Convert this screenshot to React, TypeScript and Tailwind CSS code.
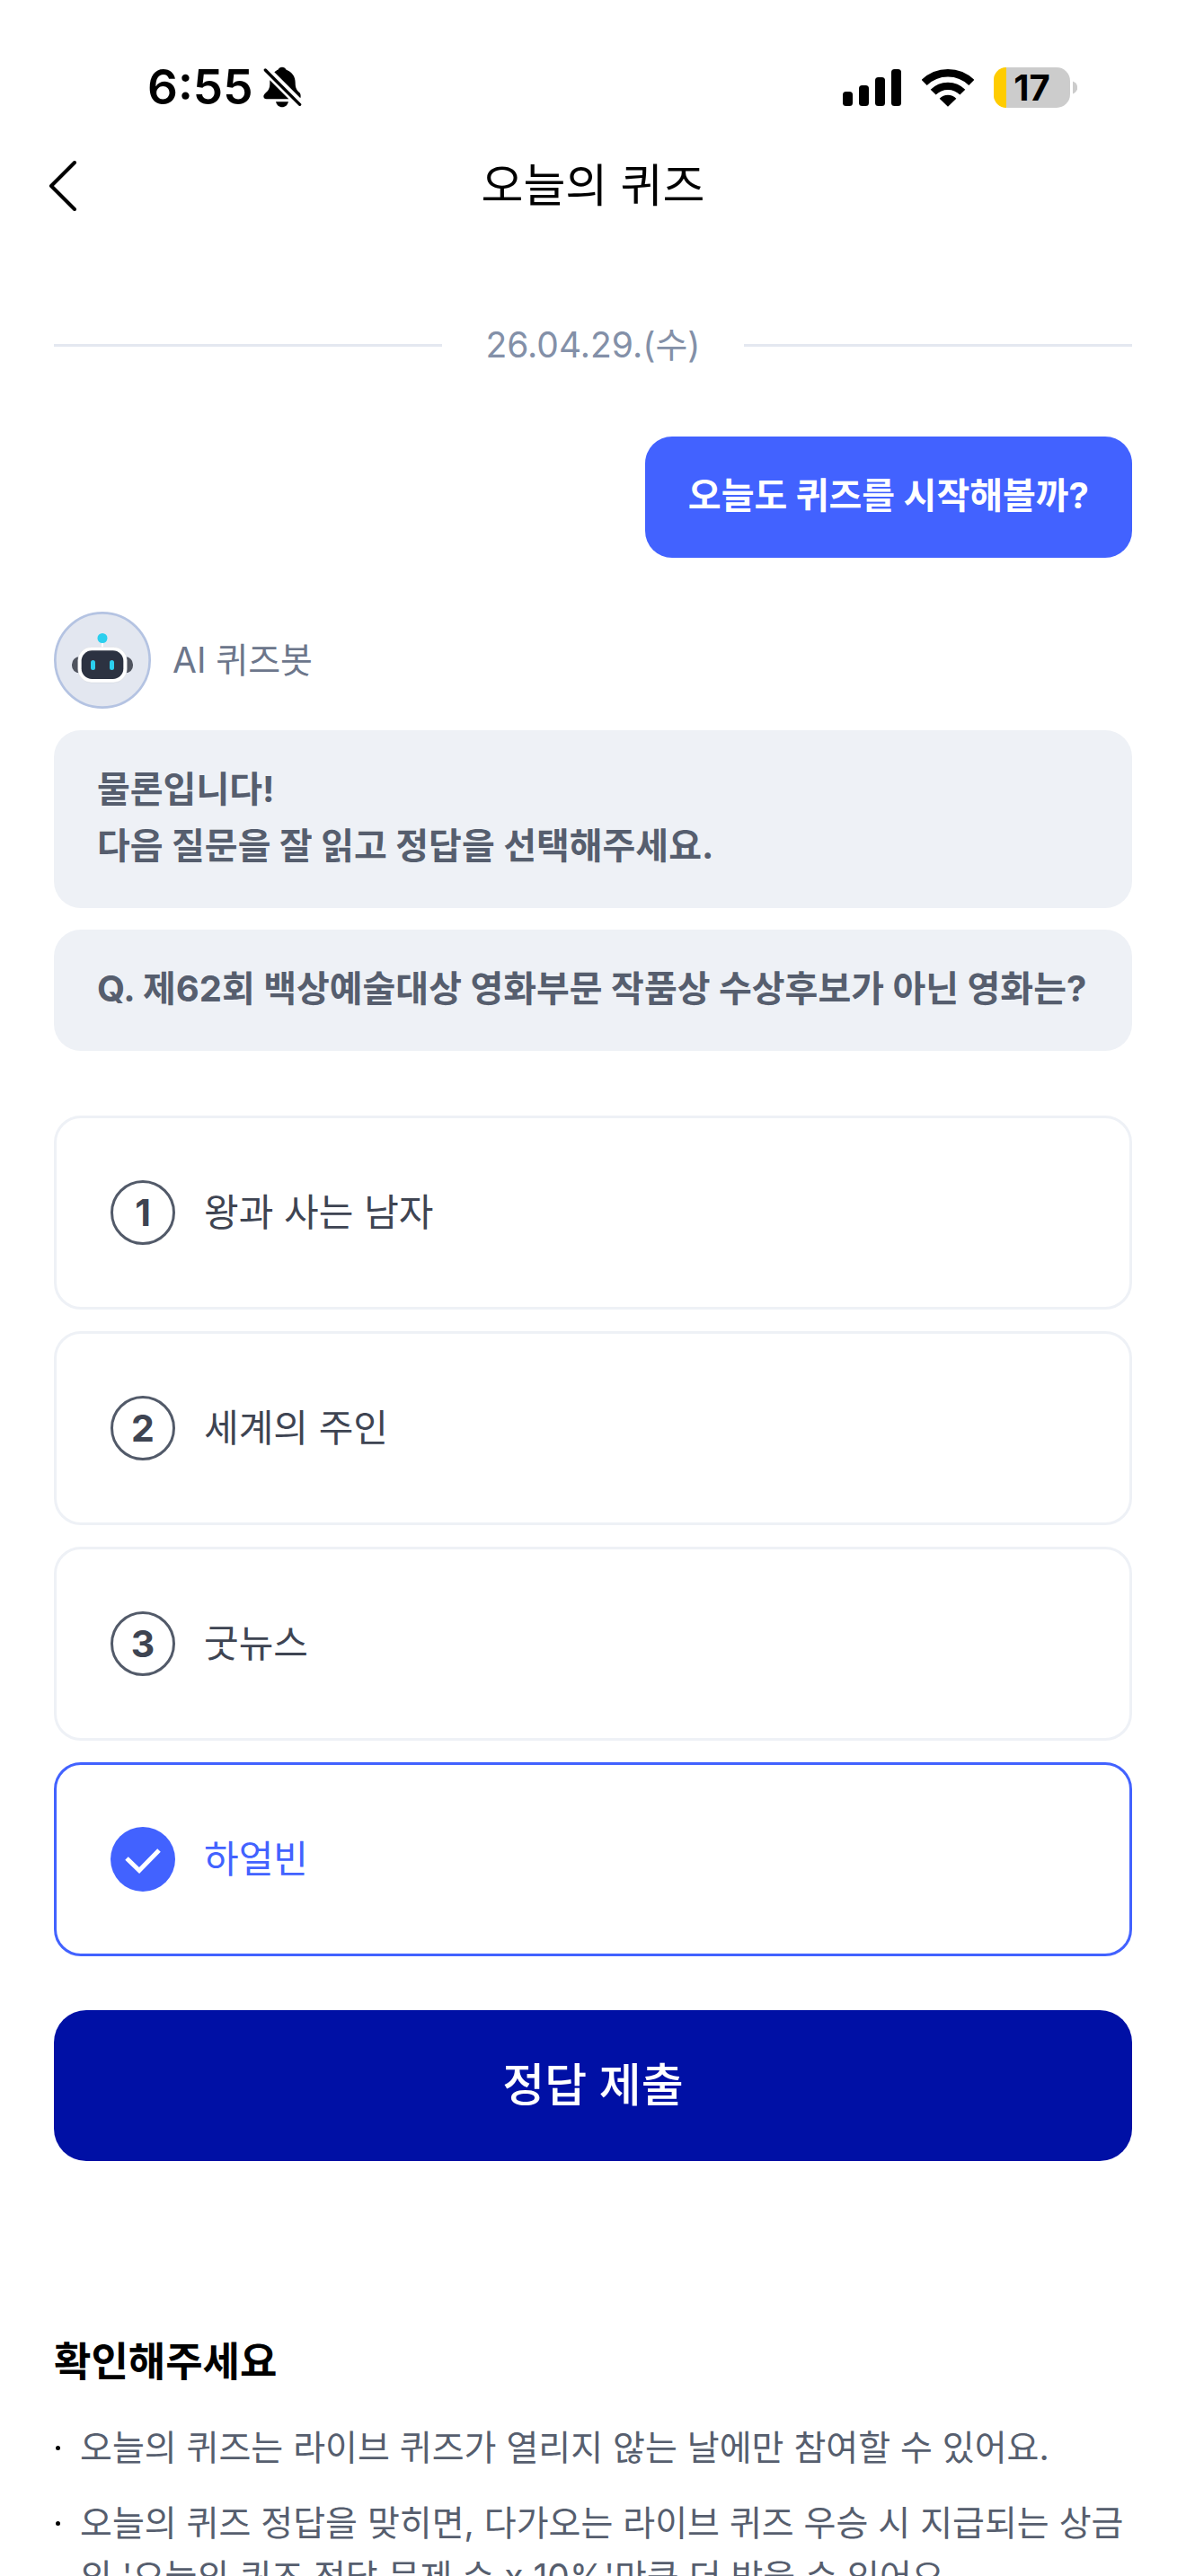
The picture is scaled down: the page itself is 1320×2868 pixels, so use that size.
import { useState } from "react";

// --- QUIZ DATA ---
const options = [
  { id: 1, label: "왕과 사는 남자" },
  { id: 2, label: "세계의 주인" },
  { id: 3, label: "굿뉴스" },
  { id: 4, label: "하얼빈" },
];

const notices = [
  "오늘의 퀴즈는 라이브 퀴즈가 열리지 않는 날에만 참여할 수 있어요.",
  "오늘의 퀴즈 정답을 맞히면, 다가오는 라이브 퀴즈 우승 시 지급되는 상금의 '오늘의 퀴즈 정답 문제 수 x 10%'만큼 더 받을 수 있어요.",
];

function StatusBar() {
  return (
    <div className="flex h-[150px] shrink-0 items-center justify-between pt-11 pr-[121px] pl-[164px] text-black">
      <div className="flex items-center gap-3">
        <span className="text-[53px] leading-[60px] font-semibold">6:55</span>
        <svg className="h-[46px] w-[43px]" viewBox="460 75 129 138" fill="currentColor" aria-hidden="true">
          <path d="M497 94C501 90 506 87 509 86C512 80 517 77 523 77C529 77 534 80 537 86C556 93 567 108 567 129C567 149 573 155 581 162C585 166 586 174 584 181Z" />
          <path d="M482 121L545 184H471C465 184 461 181 461 175C461 162 482 161 482 134Z" />
          <path d="M502 193H544C541 204 534 211 523 211C512 211 505 204 502 193Z" />
          <path d="M467 87L582 202" stroke="currentColor" strokeWidth="10" strokeLinecap="round" />
        </svg>
      </div>

      <div className="flex items-center">
        <svg className="mr-[22px] h-[42px] w-[66px]" viewBox="0 0 66 42" fill="currentColor" aria-hidden="true">
          <rect x="0" y="26" width="11" height="16" rx="3.5" />
          <rect x="18" y="19" width="11" height="23" rx="3.5" />
          <rect x="36" y="10" width="11" height="32" rx="3.5" />
          <rect x="54" y="1" width="11" height="41" rx="3.5" />
        </svg>
        <svg className="mr-[22px] h-[43px] w-[58px]" viewBox="374 73 174 129" fill="none" stroke="currentColor" aria-hidden="true">
          <path d="M382 121A113 113 0 0 1 540 121" strokeWidth="26" />
          <path d="M412 153A69 69 0 0 1 510 153" strokeWidth="25" />
          <path d="M461 201L433 174A40 40 0 0 1 489 174Z" fill="currentColor" stroke="none" />
        </svg>
        <div className="relative flex h-[45px] w-[85px] items-center justify-center rounded-[15px] bg-[#cccccc]">
          <span className="absolute inset-y-0 left-0 w-3.5 rounded-l-[14px] bg-[#ffcc00]" />
          <span className="relative text-[40px] leading-[45px] font-bold">17</span>
        </div>
        <svg className="ml-[3px] h-[15px] w-[5px]" viewBox="0 0 5 15" aria-hidden="true">
          <path d="M0 0.5C7 3 7 12 0 14.5Z" fill="#cccccc" />
        </svg>
      </div>
    </div>
  );
}

function BotAvatar() {
  return (
    <svg className="size-[108px]" viewBox="60 63 324 324" aria-hidden="true">
      <circle cx="222" cy="225" r="158" fill="#e3e7f0" stroke="#b4c3e2" strokeWidth="8" />
      <rect x="120" y="214" width="50" height="54" rx="25" fill="#50545f" />
      <rect x="274" y="214" width="50" height="54" rx="25" fill="#50545f" />
      <path d="M222 160V184" stroke="#ffffff" strokeWidth="6" />
      <circle cx="222" cy="151.500" r="16.500" fill="#2bcfee" />
      <rect x="140" y="181" width="164" height="119" rx="45" fill="#ffffff" stroke="#c4c7cd" strokeWidth="1" />
      <rect x="152" y="193" width="140" height="95" rx="35" fill="#2c3241" />
      <rect x="183" y="225" width="15" height="33" rx="7.500" fill="#2bcfee" />
      <rect x="246" y="225" width="15" height="33" rx="7.500" fill="#2bcfee" />
    </svg>
  );
}

export default function App() {
  const [selected, setSelected] = useState(4);

  return (
    <div className="flex h-screen flex-col bg-white font-[Inter,'Noto_Sans_CJK_KR',sans-serif]">
      <StatusBar />

      {/* HEADER */}
      <header className="grid h-[114px] shrink-0 grid-cols-[1fr_auto_1fr] items-center px-[54px]">
        <button type="button" aria-label="뒤로" className="justify-self-start">
          <svg className="h-14 w-8" viewBox="0 0 32 56" fill="none" stroke="#000000" strokeWidth="4" strokeLinecap="round" strokeLinejoin="round">
            <path d="M29 2L3 28L29 54" />
          </svg>
        </button>
        <h1 className="text-[51px] leading-[72px] text-black">오늘의 퀴즈</h1>
      </header>

      <main className="flex-1 overflow-y-auto px-[60px] pt-[90px] [scrollbar-width:none]">
        {/* DATE */}
        <div className="flex items-center gap-12">
          <span className="h-[3px] flex-1 bg-[#e4e8f0]" />
          <time className="text-[39px] leading-[60px] text-[#8390a8]">26.04.29.(수)</time>
          <span className="h-[3px] flex-1 bg-[#e4e8f0]" />
        </div>

        {/* CHAT */}
        <div className="mt-[72px] flex justify-end">
          <p className="rounded-[30px] bg-[#4262ff] px-12 pt-[34px] pb-[38px] text-[40px] leading-[63px] font-bold text-white">
            오늘도 퀴즈를 시작해볼까?
          </p>
        </div>

        <div className="mt-[60px] flex items-center gap-6">
          <BotAvatar />
          <span className="text-[39px] leading-[60px] text-[#6c768b]">AI 퀴즈봇</span>
        </div>

        <div className="mt-6 flex flex-col gap-6 text-[40px] leading-[63px] font-bold text-[#565e6e]">
          <p className="rounded-[30px] bg-[#eef1f6] px-12 pt-[34px] pb-[38px]">
            물론입니다!
            <br />
            다음 질문을 잘 읽고 정답을 선택해주세요.
          </p>
          <p className="rounded-[30px] bg-[#eef1f6] pt-[34px] pr-9 pb-[38px] pl-12">
            Q. 제62회 백상예술대상 영화부문 작품상 수상후보가 아닌 영화는?
          </p>
        </div>

        {/* ANSWERS */}
        <form onSubmit={(e) => e.preventDefault()}>
          <div className="mt-[72px] flex flex-col gap-6">
            {options.map((option) => (
              <label
                key={option.id}
                className={`relative flex h-[216px] cursor-pointer items-center gap-8 rounded-[30px] border-3 px-[60px] ${
                  selected === option.id ? "border-[#4262ff] text-[#4262ff]" : "border-[#eef1f6] text-[#3e4452]"
                }`}
              >
                <input
                  type="radio"
                  name="answer"
                  className="sr-only"
                  checked={selected === option.id}
                  onChange={() => setSelected(option.id)}
                />
                {selected === option.id ? (
                  <svg className="size-[72px]" viewBox="0 0 72 72" fill="none" aria-hidden="true">
                    <circle cx="36" cy="36" r="36" fill="#4262ff" />
                    <path d="M18 35L32 48.500L54 26" stroke="#ffffff" strokeWidth="5" />
                  </svg>
                ) : (
                  <span className="flex size-[72px] items-center justify-center rounded-full border-3 border-[#525a69] text-[41px] leading-[60px] font-bold">
                    {option.id}
                  </span>
                )}
                <span className="text-[42px] leading-[60px]">{option.label}</span>
              </label>
            ))}
          </div>

          <button
            type="submit"
            className="mt-[60px] h-[168px] w-full rounded-[36px] bg-[#0010a5] text-[51px] leading-[72px] font-medium text-white"
          >
            정답 제출
          </button>
        </form>

        {/* NOTICE */}
        <section className="mt-[191px]">
          <h2 className="text-[45px] leading-[66px] font-bold text-black">확인해주세요</h2>
          <ul className="mt-8 flex flex-col gap-6 text-[39px] leading-[60px] text-[#565e6e]">
            {notices.map((notice) => (
              <li key={notice} className="flex gap-[22px]">
                <span className="mt-7 ml-0.5 size-[5px] shrink-0 rounded-full bg-black" />
                <span>{notice}</span>
              </li>
            ))}
          </ul>
        </section>
      </main>
    </div>
  );
}
